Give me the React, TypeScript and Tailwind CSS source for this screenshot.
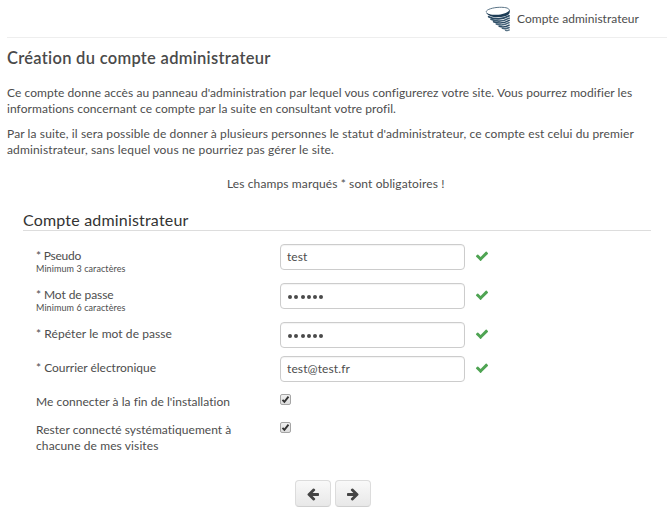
import type { ReactNode } from "react";

const ICONS = {
  check:
    "M1671 566q0 40-28 68l-724 724-136 136q-28 28-68 28t-68-28l-136-136-362-362q-28-28-28-68t28-68l136-136q28-28 68-28t68 28l294 295 656-657q28-28 68-28t68 28l136 136q28 28 28 68z",
  left:
    "M1664 896v128q0 53-32.500 90.500t-84.500 37.500h-704l293 294q38 36 38 90t-38 90l-75 76q-37 37-90 37-52 0-91-37l-651-652q-37-37-37-90 0-52 37-91l651-650q38-38 91-38 52 0 90 38l75 74q38 38 38 91t-38 91l-293 293h704q52 0 84.500 37.500t32.500 90.500z",
};

function Icon({ path, className }: { path: string; className: string }) {
  return (
    <svg viewBox="0 0 1792 1792" fill="currentColor" className={className}>
      <path d={path} />
    </svg>
  );
}

function Tornado() {
  return (
    <svg viewBox="0 0 26 26" className="h-[26px] w-[26px]" fill="none" strokeLinecap="round">
      <path d="M1.200 5.400C1.500 3.400 8 1.500 14.500 1.300c5-.1 9 .5 9.500 2" stroke="#4a6579" strokeWidth="0.900" />
      <path d="M.8 5.700c1.500 2.500 7 3.600 12.700 3C19 8 23.500 6.300 24.800 3.500c.3 2.200-.2 4-1.300 5.100-2.600 1.700-6 2.700-10.500 2.700C7 11.300 1.500 9.200.8 5.700z" fill="#1d3c55" />
      <path d="M3.600 10.700c5.500 3.200 14.500 2.800 20.600-.9" stroke="#2c4b64" strokeWidth="1.600" />
      <path d="M6 13.300c5.300 2.500 12.500 2.200 18.200-1.200" stroke="#3b5a71" strokeWidth="1.600" />
      <path d="M8.500 15.700c4.700 2 10.700 1.600 15.700-1.300" stroke="#2c4b64" strokeWidth="1.500" />
      <path d="M11.200 18c4 1.500 8.800 1.100 12.900-1.300" stroke="#46647a" strokeWidth="1.500" />
      <path d="M14.200 20.300c3.200 1.100 6.800.7 9.900-1.200" stroke="#2c4b64" strokeWidth="1.500" />
      <path d="M17.400 22.400c2.400.7 4.700.4 6.700-.9" stroke="#46647a" strokeWidth="1.500" />
      <path d="M20.600 24.300c1.300.5 2.600.3 3.600-.4" stroke="#5b7587" strokeWidth="1.400" />
    </svg>
  );
}

function Field({ label, hint, height, labelTop = "pt-1", children }: { label: ReactNode; hint?: string; height: string; labelTop?: string; children: ReactNode }) {
  return (
    <div className={"flex items-start " + height}>
      <div className={"w-[244px] shrink-0 leading-4 " + labelTop}>
        {label}
        {hint && <div className="-mt-[1px] text-[9px] leading-[11px] tracking-[0.088px]">{hint}</div>}
      </div>
      {children}
    </div>
  );
}

function Value({ children, className = "" }: { children: ReactNode; className?: string }) {
  return (
    <>
      <div className="flex h-[26px] w-[185px] items-center rounded-[4px] border border-[#cccccc] bg-white px-[6px] shadow-[inset_0_1px_1px_#f3f3f3]">
        <span className={className}>{children}</span>
      </div>
      <Icon path={ICONS.check} className="mt-[5px] ml-[10px] h-[14px] w-[14px] text-[#4fa453]" />
    </>
  );
}

function Dots() {
  return (
    <span className="flex pt-[1px] pl-[1px]">
      {[0, 1, 2, 3, 4, 5].map((i) => (
        <span key={i} className="w-[6.3px]">
          <span className="block h-[4px] w-[4px] rounded-full bg-[#4a4a4a]" />
        </span>
      ))}
    </span>
  );
}

function Checkbox() {
  return (
    <span className="mt-[1px] flex h-[11px] w-[11px] items-center justify-center rounded-[2px] border border-[#a5a5a5] bg-gradient-to-b from-[#f0f0f0] to-[#dddddd]">
      <svg viewBox="0 0 9 9" className="h-[9px] w-[9px] shrink-0" fill="none">
        <path d="M1.500 4.800 3.400 6.800 7.500 1.700" stroke="#333" strokeWidth="1.900" />
      </svg>
    </span>
  );
}

function NavButton({ children }: { children: ReactNode }) {
  return (
    <button className="flex h-[27px] w-9 items-center justify-center rounded-[4px] border border-[#dcdcdc] border-b-[#cfcfcf] bg-gradient-to-b from-[#f9f9f9] to-[#e8e8e8] text-[#444]">
      {children}
    </button>
  );
}

export default function App() {
  return (
    <div className="h-[512px] w-[672px] overflow-hidden bg-white font-['Lato','Open_Sans',sans-serif] text-[12px] leading-4 text-[#4d4d4d]">
      <header className="ml-[7px] flex h-[38px] w-[660px] items-start border-b border-[#eeeeee] pt-[6px] pl-[478px]">
        <Tornado />
        <span className="mt-[5px] ml-[6px] tracking-[0.036px] whitespace-nowrap">Compte administrateur</span>
      </header>

      <h1 className="mt-[10px] ml-[7px] text-[16.500px] leading-5 font-semibold tracking-[0.283px] whitespace-nowrap text-[#4a4a4a]">
        Création du compte administrateur
      </h1>

      <div className="mt-[17px] ml-[7px] whitespace-nowrap">
        <p>
          <span className="tracking-[0.06px]">Ce compte donne accès au panneau d'administration par lequel vous configurerez votre site. Vous pourrez modifier les</span>
          <br />
          <span className="tracking-[0.067px]">informations concernant ce compte par la suite en consultant votre profil.</span>
        </p>
        <p className="mt-[9px]">
          <span className="tracking-[0.113px]">Par la suite, il sera possible de donner à plusieurs personnes le statut d'administrateur, ce compte est celui du premier</span>
          <br />
          <span className="tracking-[0.148px]">administrateur, sans lequel vous ne pourriez pas gérer le site.</span>
        </p>
      </div>
      <p className="mt-[18px] ml-[227px] tracking-[0.113px]">Les champs marqués * sont obligatoires !</p>

      <section className="mt-[18px] ml-[23px] w-[628px]">
        <h2 className="h-[21px] border-b border-[#dddddd] text-[16px] leading-5 tracking-[0.184px] text-[#333]">Compte administrateur</h2>
        <div className="mt-[13px] pl-[13px]">
          <Field height="h-[39px]" label={<span className="tracking-[-0.248px]">* Pseudo</span>} hint="Minimum 3 caractères">
            <Value className="tracking-[0.098px]">test</Value>
          </Field>
          <Field height="h-[39px]" label={<span className="tracking-[-0.089px]">* Mot de passe</span>} hint="Minimum 6 caractères">
            <Value><Dots /></Value>
          </Field>
          <Field height="h-[34px]" label={<span className="tracking-[0.072px]">* Répéter le mot de passe</span>}>
            <Value><Dots /></Value>
          </Field>
          <Field height="h-[37px]" label={<span className="tracking-[-0.022px]">* Courrier électronique</span>}>
            <Value className="tracking-[0.111px]">test@test.fr</Value>
          </Field>
          <Field height="h-[28px]" labelTop="pt-[1px]" label={<span className="tracking-[0.039px]">Me connecter à la fin de l'installation</span>}>
            <Checkbox />
          </Field>
          <Field
            height="h-[59px]"
            labelTop="pt-[1px]"
            label={
              <>
                <span className="block tracking-[0.043px]">Rester connecté systématiquement à</span>
                <span className="block tracking-[0.105px]">chacune de mes visites</span>
              </>
            }
          >
            <Checkbox />
          </Field>
        </div>
      </section>

      <div className="ml-[295px] flex gap-1">
        <NavButton><Icon path={ICONS.left} className="h-[14px] w-[14px]" /></NavButton>
        <NavButton><Icon path={ICONS.left} className="h-[14px] w-[14px] -scale-x-100" /></NavButton>
      </div>
    </div>
  );
}
